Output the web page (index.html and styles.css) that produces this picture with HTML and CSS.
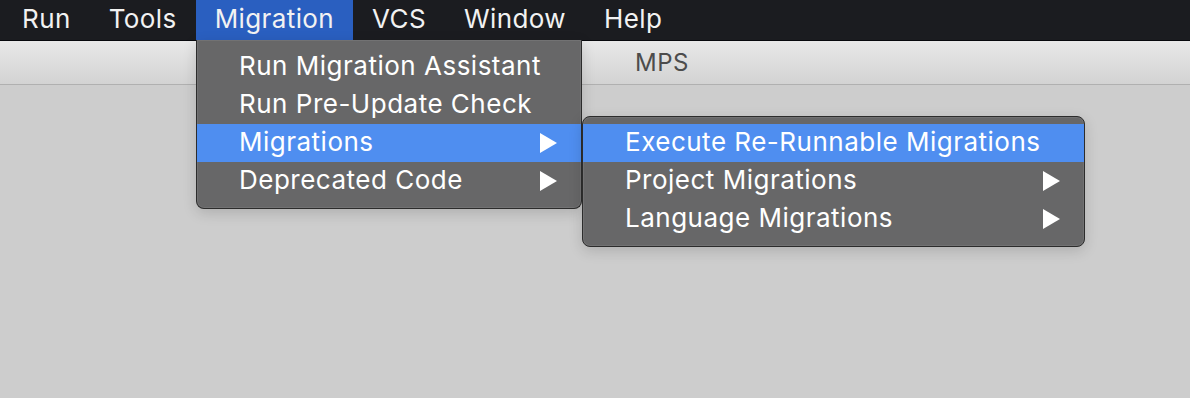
FILE: index.html
```html
<!DOCTYPE html>
<html lang="en">
<head>
  <meta charset="UTF-8">
  <title>MPS - Migration menu</title>
  <link rel="stylesheet" href="styles.css">
</head>
<body>
  <div class="menubar">
    <span class="menubar-item">Run</span>
    <span class="menubar-item">Tools</span>
    <span class="menubar-item active">Migration</span>
    <span class="menubar-item">VCS</span>
    <span class="menubar-item">Window</span>
    <span class="menubar-item">Help</span>
  </div>

  <div class="titlebar">
    <span class="title">MPS</span>
  </div>

  <div class="workspace"></div>

  <!-- Migration dropdown -->
  <div class="menu menu-main">
    <div class="menu-item">Run Migration Assistant</div>
    <div class="menu-item">Run Pre-Update Check</div>
    <div class="menu-item selected">Migrations <span class="arrow"></span></div>
    <div class="menu-item">Deprecated Code <span class="arrow"></span></div>
  </div>

  <!-- Migrations submenu -->
  <div class="menu menu-sub">
    <div class="menu-item selected">Execute Re-Runnable Migrations</div>
    <div class="menu-item">Project Migrations <span class="arrow"></span></div>
    <div class="menu-item">Language Migrations <span class="arrow"></span></div>
  </div>
</body>
</html>
```

FILE: styles.css
```css
body {
  margin: 0;
  height: 398px;
  overflow: hidden;
  background-color: #cdcdcd;
  font-family: Inter, "Liberation Sans", sans-serif;
  -webkit-font-smoothing: antialiased;
}
.menubar {
  display: flex;
  height: 40px;
  padding-left: 3px;
  background-color: #1b1c20;
  border-bottom: 1px solid #07080c;
}
.menubar-item {
  display: flex;
  align-items: center;
  padding: 0 19px 3px;
  color: #f2f2f2;
  font-size: 26px;
  letter-spacing: 0.4px;
}
.menubar-item.active {
  background-color: #2a5fc0;
}
.titlebar {
  height: 43px;
  display: flex;
  align-items: center;
  padding-left: 635px;
  background: linear-gradient(#e8e8e8, #d3d3d3);
  border-bottom: 1px solid #b0b0b0;
}
.title {
  color: #4c4c4c;
  font-size: 24px;
  letter-spacing: 0.5px;
}
.workspace {
  height: 300px;
}
.menu {
  position: absolute;
  box-sizing: border-box;
  padding: 8px 0;
  background-color: #676768;
  border: 1px solid #2c2c2c;
  box-shadow: 0 0 0 1px rgba(255, 255, 255, 0.08) inset, 0 4px 14px rgba(0, 0, 0, 0.15);
}
.menu-main {
  left: 196px;
  top: 40px;
  width: 386px;
  height: 169px;
  border-top: none;
  border-radius: 0 0 8px 8px;
}
.menu-sub {
  left: 582px;
  top: 116px;
  width: 503px;
  height: 131px;
  border-radius: 8px;
  padding-top: 7px;
}
.menu-item {
  display: flex;
  align-items: center;
  justify-content: space-between;
  box-sizing: border-box;
  height: 38px;
  padding: 0 24px 3px 42px;
  color: #ffffff;
  font-size: 26px;
  letter-spacing: 0.5px;
}
.menu-item.selected {
  background-color: #4f8ef0;
}
.arrow {
  width: 0;
  height: 0;
  margin-top: 3px;
  border-top: 10px solid transparent;
  border-bottom: 10px solid transparent;
  border-left: 17px solid #ffffff;
}
```
